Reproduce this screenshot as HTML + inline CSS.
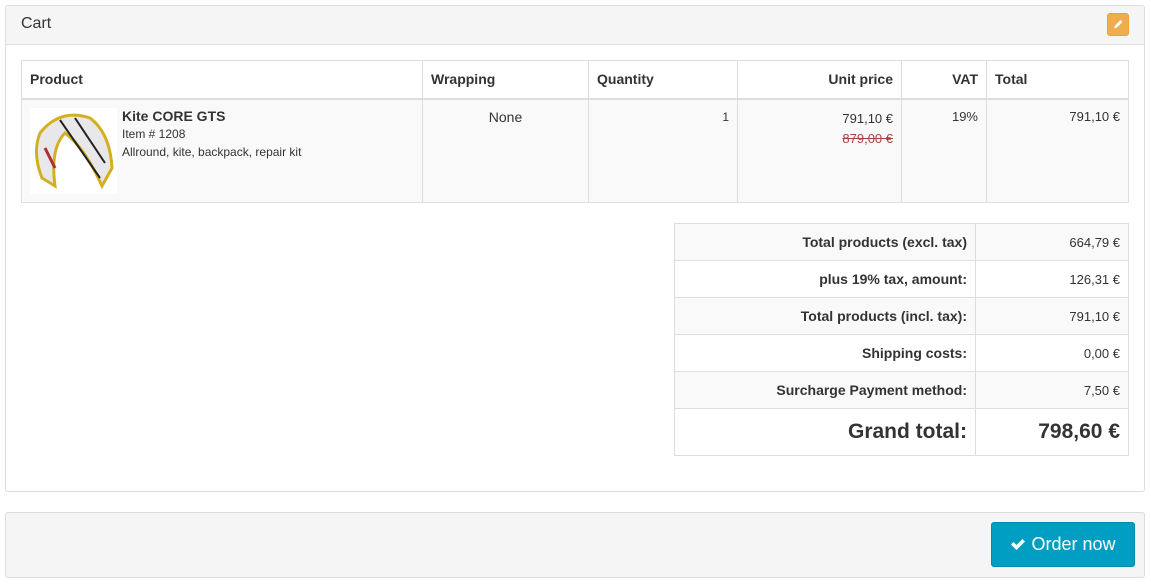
<!DOCTYPE html>
<html><head><meta charset="utf-8"><style>
*{box-sizing:border-box;margin:0;padding:0}
body{width:1151px;height:584px;background:#fff;font-family:"Liberation Sans",sans-serif;font-size:14px;color:#333;position:relative;overflow:hidden}
.a{position:absolute}
.panel{left:5px;top:5px;width:1140px;height:487px;border:1px solid #ddd;border-radius:3px;background:#fff}
.ph{left:0;top:0;width:1138px;height:39px;background:#f5f5f5;border-bottom:1px solid #ddd;border-radius:3px 3px 0 0}
table{border-collapse:collapse;position:absolute;table-layout:fixed}
td,th{border:1px solid #ddd;padding:0 8px;vertical-align:top}
th{font-weight:bold;text-align:left;height:38px;vertical-align:middle;border-bottom:2px solid #ddd}
.r{text-align:right}
.s td{height:37px;vertical-align:middle;font-size:13px}
.s td.l{font-weight:bold;text-align:right;font-size:14px}
.s td.v{text-align:right}
.s tr:nth-child(odd) td{background:#f9f9f9}
</style></head><body>
<div class="a panel">
 <div class="a ph"><div class="a" style="left:15px;top:9px;font-size:16px;color:#333">Cart</div>
 <div class="a" style="left:1101px;top:7px;width:22px;height:23px;background:#f0ad4e;border-radius:3px;border:1px solid #eea236">
  <svg width="20" height="21" viewBox="0 0 20 21" style="position:absolute;left:0;top:0"><path d="M6 14.5 L7 11.5 L12.5 6 L14.5 8 L9 13.5 Z" fill="#fff"/></svg></div>
 </div>
</div>
<table style="left:21px;top:60px;width:1107px">
<colgroup><col style="width:401px"><col style="width:166px"><col style="width:149px"><col style="width:164px"><col style="width:85px"><col style="width:142px"></colgroup>
<tr><th>Product</th><th>Wrapping</th><th>Quantity</th><th class="r">Unit price</th><th class="r">VAT</th><th>Total</th></tr>
<tr style="background:#f9f9f9;height:104px">
<td style="padding:8px 8px;position:relative">
 <svg width="87" height="86" viewBox="0 0 87 86" style="position:absolute;left:8px;top:8px;background:#fff">
 <path d="M10 25 Q30 0 60 10 Q80 25 82 60 L72 78 Q55 40 35 25 Q20 40 25 78 L12 70 Q2 45 10 25Z" fill="#e8e8ea" stroke="#d4b020" stroke-width="3"/>
 <path d="M30 12 L70 70 M45 10 L75 55" stroke="#222" stroke-width="2"/>
 <path d="M15 40 L25 60" stroke="#b03030" stroke-width="3"/></svg>
 <div style="margin-left:92px;line-height:17px;padding-top:0"><b>Kite CORE GTS</b><br><span style="font-size:12px">Item # 1208</span><br><span style="font-size:12px">Allround, kite, backpack, repair kit</span></div>
</td>
<td style="text-align:center;padding-top:9px">None</td>
<td class="r" style="padding-top:10px;font-size:12px">1</td>
<td class="r" style="padding-top:9px;line-height:20px;font-size:13px">791,10 €<br><s style="color:#a94442">879,00 €</s></td>
<td class="r" style="padding-top:9px;font-size:13px">19%</td>
<td class="r" style="padding-top:9px;font-size:13px">791,10 €</td>
</tr></table>
<table class="s" style="left:674px;top:223px;width:454px">
<colgroup><col style="width:301px"><col style="width:153px"></colgroup>
<tr><td class="l">Total products (excl. tax)</td><td class="v">664,79 €</td></tr>
<tr><td class="l">plus 19% tax, amount:</td><td class="v">126,31 €</td></tr>
<tr><td class="l">Total products (incl. tax):</td><td class="v">791,10 €</td></tr>
<tr><td class="l">Shipping costs:</td><td class="v">0,00 €</td></tr>
<tr><td class="l">Surcharge Payment method:</td><td class="v">7,50 €</td></tr>
<tr><td class="l" style="height:47px;font-size:21px">Grand total:</td><td class="v" style="font-size:21px;font-weight:bold">798,60 €</td></tr>
</table>
<div class="a" style="left:5px;top:512px;width:1140px;height:66px;background:#f5f5f5;border:1px solid #ddd;border-radius:3px"></div>
<div class="a" style="left:991px;top:522px;width:144px;height:45px;background:#009ec3;border:1px solid #008aab;border-radius:3px;color:#fff;font-size:18px;line-height:43px;text-align:center">
<svg width="16" height="14" viewBox="0 0 16 14" style="vertical-align:-1px"><path d="M1 7.5 L3.5 5 L6.5 8 L12.5 2 L15 4.5 L6.5 13 Z" fill="#fff"/></svg> Order now</div>
</body></html>
